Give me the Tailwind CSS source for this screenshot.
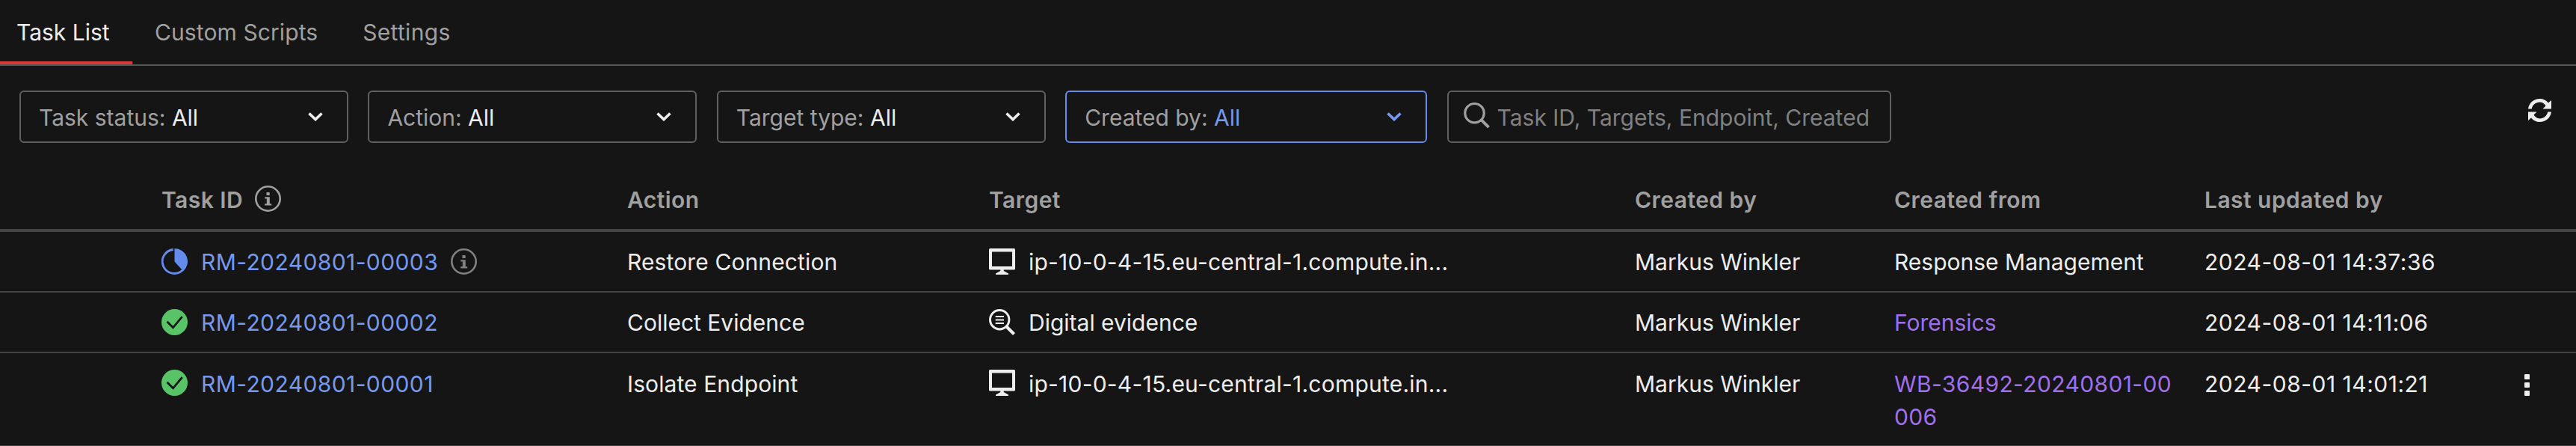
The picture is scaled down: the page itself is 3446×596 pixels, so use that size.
<!DOCTYPE html>
<html lang="en">
<head>
<meta charset="utf-8">
<title>Response Management</title>
<script src="https://cdn.jsdelivr.net/npm/@tailwindcss/browser@4"></script>
</head>
<body class="w-[3446px] h-[596px] overflow-hidden bg-[#151515] font-['Inter',sans-serif] text-[30px] leading-[44px] text-[#ededed]">
<svg class="hidden">
  <symbol id="chevron" viewBox="0 0 20 12"><path d="M1.5 1.5 10 9.6l8.500-8.100" fill="none" stroke="currentColor" stroke-width="3.600"/></symbol>
  <symbol id="info" viewBox="0 0 35 35"><circle cx="17.500" cy="17.500" r="16.200" fill="none" stroke="currentColor" stroke-width="2.600"/><path d="M15.500 9h4.200v4h-4.200zM13.300 15.200h6.500v9h2.400v2.300h-9v-2.300h2.600v-6.700h-2.500z" fill="currentColor"/></symbol>
  <symbol id="done" viewBox="0 0 35 35"><circle cx="17.500" cy="17.500" r="17.500" fill="#58c367"/><path d="m7.500 16.800 8 8L27.700 10.200" fill="none" stroke="#151515" stroke-width="2.800"/></symbol>
  <symbol id="monitor" viewBox="0 0 35 35"><path fill-rule="evenodd" d="M1.500 0h32Q35 0 35 1.500v25.500q0 1.500-1.500 1.500H19.700v1.500l6.300 3.500V35H9v-1.500l6.300-3.500v-1.500H1.500Q0 28.500 0 27V1.500Q0 0 1.500 0zM4 4.500v19.500h27V4.500z" fill="currentColor"/></symbol>
</svg>

<nav class="flex h-[88px] items-stretch border-b-2 border-[#555555] text-[#a0a0a0]">
  <div class="flex w-[177px] items-center border-b-4 border-[#d93c38] pl-[22px] pt-1 text-[#ededed]">Task List</div>
  <div class="flex items-center pl-[30px] tracking-[0.100px]">Custom Scripts</div>
  <div class="flex items-center pl-[60px] tracking-[0.300px]">Settings</div>
</nav>

<div class="flex h-[142px] items-start pl-[26px] pr-[33px] pt-[33px]">
  <div class="flex grow items-start gap-[26.400px]">
    <div class="flex h-[70px] w-[440px] items-center justify-between rounded-[6px] border-2 border-[#606060] pl-[24px] pr-[32px] pt-[2px]">
      <span class="text-[#a0a0a0]">Task status: <span class="text-[#ededed]">All</span></span>
      <svg class="mb-[3px] h-3 w-5"><use href="#chevron"/></svg>
    </div>
    <div class="flex h-[70px] w-[440px] items-center justify-between rounded-[6px] border-2 border-[#606060] pl-[24px] pr-[32px] pt-[2px]">
      <span class="text-[#a0a0a0]">Action: <span class="text-[#ededed]">All</span></span>
      <svg class="mb-[3px] h-3 w-5"><use href="#chevron"/></svg>
    </div>
    <div class="flex h-[70px] w-[440px] items-center justify-between rounded-[6px] border-2 border-[#606060] pl-[24px] pr-[32px] pt-[2px]">
      <span class="text-[#a0a0a0]">Target type: <span class="text-[#ededed]">All</span></span>
      <svg class="mb-[3px] h-3 w-5"><use href="#chevron"/></svg>
    </div>
    <div class="flex h-[70px] w-[484px] items-center justify-between rounded-[6px] border-2 border-[#638ced] pl-[24px] pr-[32px] pt-[2px]">
      <span class="text-[#a0a0a0]">Created by: <span class="text-[#7599f0]">All</span></span>
      <svg class="mb-[3px] h-3 w-5 text-[#7599f0]"><use href="#chevron"/></svg>
    </div>
    <div class="flex h-[70px] w-[594px] items-center gap-[10px] rounded-[6px] border-2 border-[#606060] pl-5 text-[#808080]">
      <svg class="mb-[3px] h-[35px] w-[35px] shrink-0 text-[#a0a0a0]" viewBox="0 0 35 35" fill="none" stroke="currentColor"><circle cx="14.500" cy="14.200" r="12.700" stroke-width="3.200"/><path d="m23.500 23.200 10 10" stroke-width="4"/></svg>
      <span class="whitespace-nowrap pt-[2px]">Task ID, Targets, Endpoint, Created</span>
    </div>
  </div>
  <svg class="mt-[11px] h-[31px] w-[31px]" viewBox="0 0 31 31" fill="currentColor">
    <path d="M0 13.500C.8 5.800 7.600 0 15.600 0c4.600 0 8.500 1.900 11.300 5.500L31 2v11.500H19.500l4-4C21.600 6.500 19 4.600 15.600 4.600c-5.400 0-10 3.700-10.800 8.900z"/>
    <path d="M31 17.500C30.200 25.200 23.400 31 15.400 31c-4.600 0-8.500-1.900-11.300-5.500L0 29V17.500h11.500l-4 4c1.900 3 4.500 4.900 7.900 4.900 5.400 0 10-3.700 10.800-8.900z"/>
  </svg>
</div>

<div class="grid h-[80px] grid-cols-[623px_484px_864px_347px_415px_1fr] items-center border-b-4 border-[#444444] pl-[216px] pb-[5px] font-semibold tracking-[0.450px] text-[#a0a0a0]">
  <div class="flex items-center gap-[16px]"><span class="pt-[2px]">Task ID</span><svg class="h-[35px] w-[35px]"><use href="#info"/></svg></div>
  <div class="pt-[2px]">Action</div>
  <div class="pt-[2px]">Target</div>
  <div class="pt-[2px]">Created by</div>
  <div class="pt-[2px]">Created from</div>
  <div class="pt-[2px]">Last updated by</div>
</div>

<div class="grid h-[81px] grid-cols-[623px_484px_864px_347px_415px_1fr] items-center border-b-2 border-[#444444] pl-[216px]">
  <div class="flex items-center">
    <svg class="h-[35px] w-[35px] text-[#638ced]" viewBox="0 0 35 35"><path d="M15.800 1.500A16 16 0 1 0 28.300 29" fill="none" stroke="currentColor" stroke-width="2.800"/><path d="M17.500 0A17.500 17.500 0 0 1 29.200 30.500L17.500 17.500z" fill="currentColor"/></svg>
    <span class="pl-[18px] tracking-[0.400px] text-[#7599f0]">RM-20240801-00003</span>
    <svg class="ml-[17px] h-[35px] w-[35px] text-[#808080]"><use href="#info"/></svg>
  </div>
  <div class="tracking-[0.120px]">Restore Connection</div>
  <div class="flex items-center gap-[18px] tracking-[0.220px]"><svg class="h-[35px] w-[35px]"><use href="#monitor"/></svg>ip-10-0-4-15.eu-central-1.compute.in...</div>
  <div>Markus Winkler</div>
  <div>Response Management</div>
  <div class="tracking-[0.500px]">2024-08-01 14:37:36</div>
</div>

<div class="grid h-[81px] grid-cols-[623px_484px_864px_347px_415px_1fr] items-center border-b-2 border-[#444444] pl-[216px]">
  <div class="flex items-center">
    <svg class="h-[35px] w-[35px]"><use href="#done"/></svg>
    <span class="pl-[18px] tracking-[0.400px] text-[#7599f0]">RM-20240801-00002</span>
  </div>
  <div>Collect Evidence</div>
  <div class="flex items-center gap-[18px]">
    <svg class="h-[35px] w-[35px]" viewBox="0 0 35 35" fill="none" stroke="currentColor"><circle cx="14.200" cy="14.200" r="12.700" stroke-width="3"/><path d="m23 23 10.500 10.500" stroke-width="4.200"/><path d="M8.700 10H20M8.700 14.500H20M8.700 19H20" stroke-width="2"/></svg>Digital evidence</div>
  <div>Markus Winkler</div>
  <div class="text-[#a06fec]">Forensics</div>
  <div class="tracking-[0.500px]">2024-08-01 14:11:06</div>
</div>

<div class="grid h-[125px] grid-cols-[623px_484px_864px_347px_415px_1fr] items-start border-b-2 border-[#444444] pl-[216px] pt-[19px]">
  <div class="flex items-start">
    <svg class="mt-[3px] h-[35px] w-[35px]"><use href="#done"/></svg>
    <span class="pl-[18px] tracking-[0.400px] text-[#7599f0]">RM-20240801-00001</span>
  </div>
  <div class="tracking-[0.100px]">Isolate Endpoint</div>
  <div class="flex items-start gap-[18px] tracking-[0.220px]"><svg class="mt-[3px] h-[35px] w-[35px]"><use href="#monitor"/></svg>ip-10-0-4-15.eu-central-1.compute.in...</div>
  <div>Markus Winkler</div>
  <div class="tracking-[0.380px] text-[#a06fec]">WB-36492-20240801-00<br>006</div>
  <div class="flex items-start justify-between pr-[62px]">
    <span class="tracking-[0.500px]">2024-08-01 14:01:21</span>
    <div class="mt-[9px] flex flex-col gap-1"><i class="size-[7px] rounded-[1px] bg-[#ededed]"></i><i class="size-[7px] rounded-[1px] bg-[#ededed]"></i><i class="size-[7px] rounded-[1px] bg-[#ededed]"></i></div>
  </div>
</div>
</body>
</html>
